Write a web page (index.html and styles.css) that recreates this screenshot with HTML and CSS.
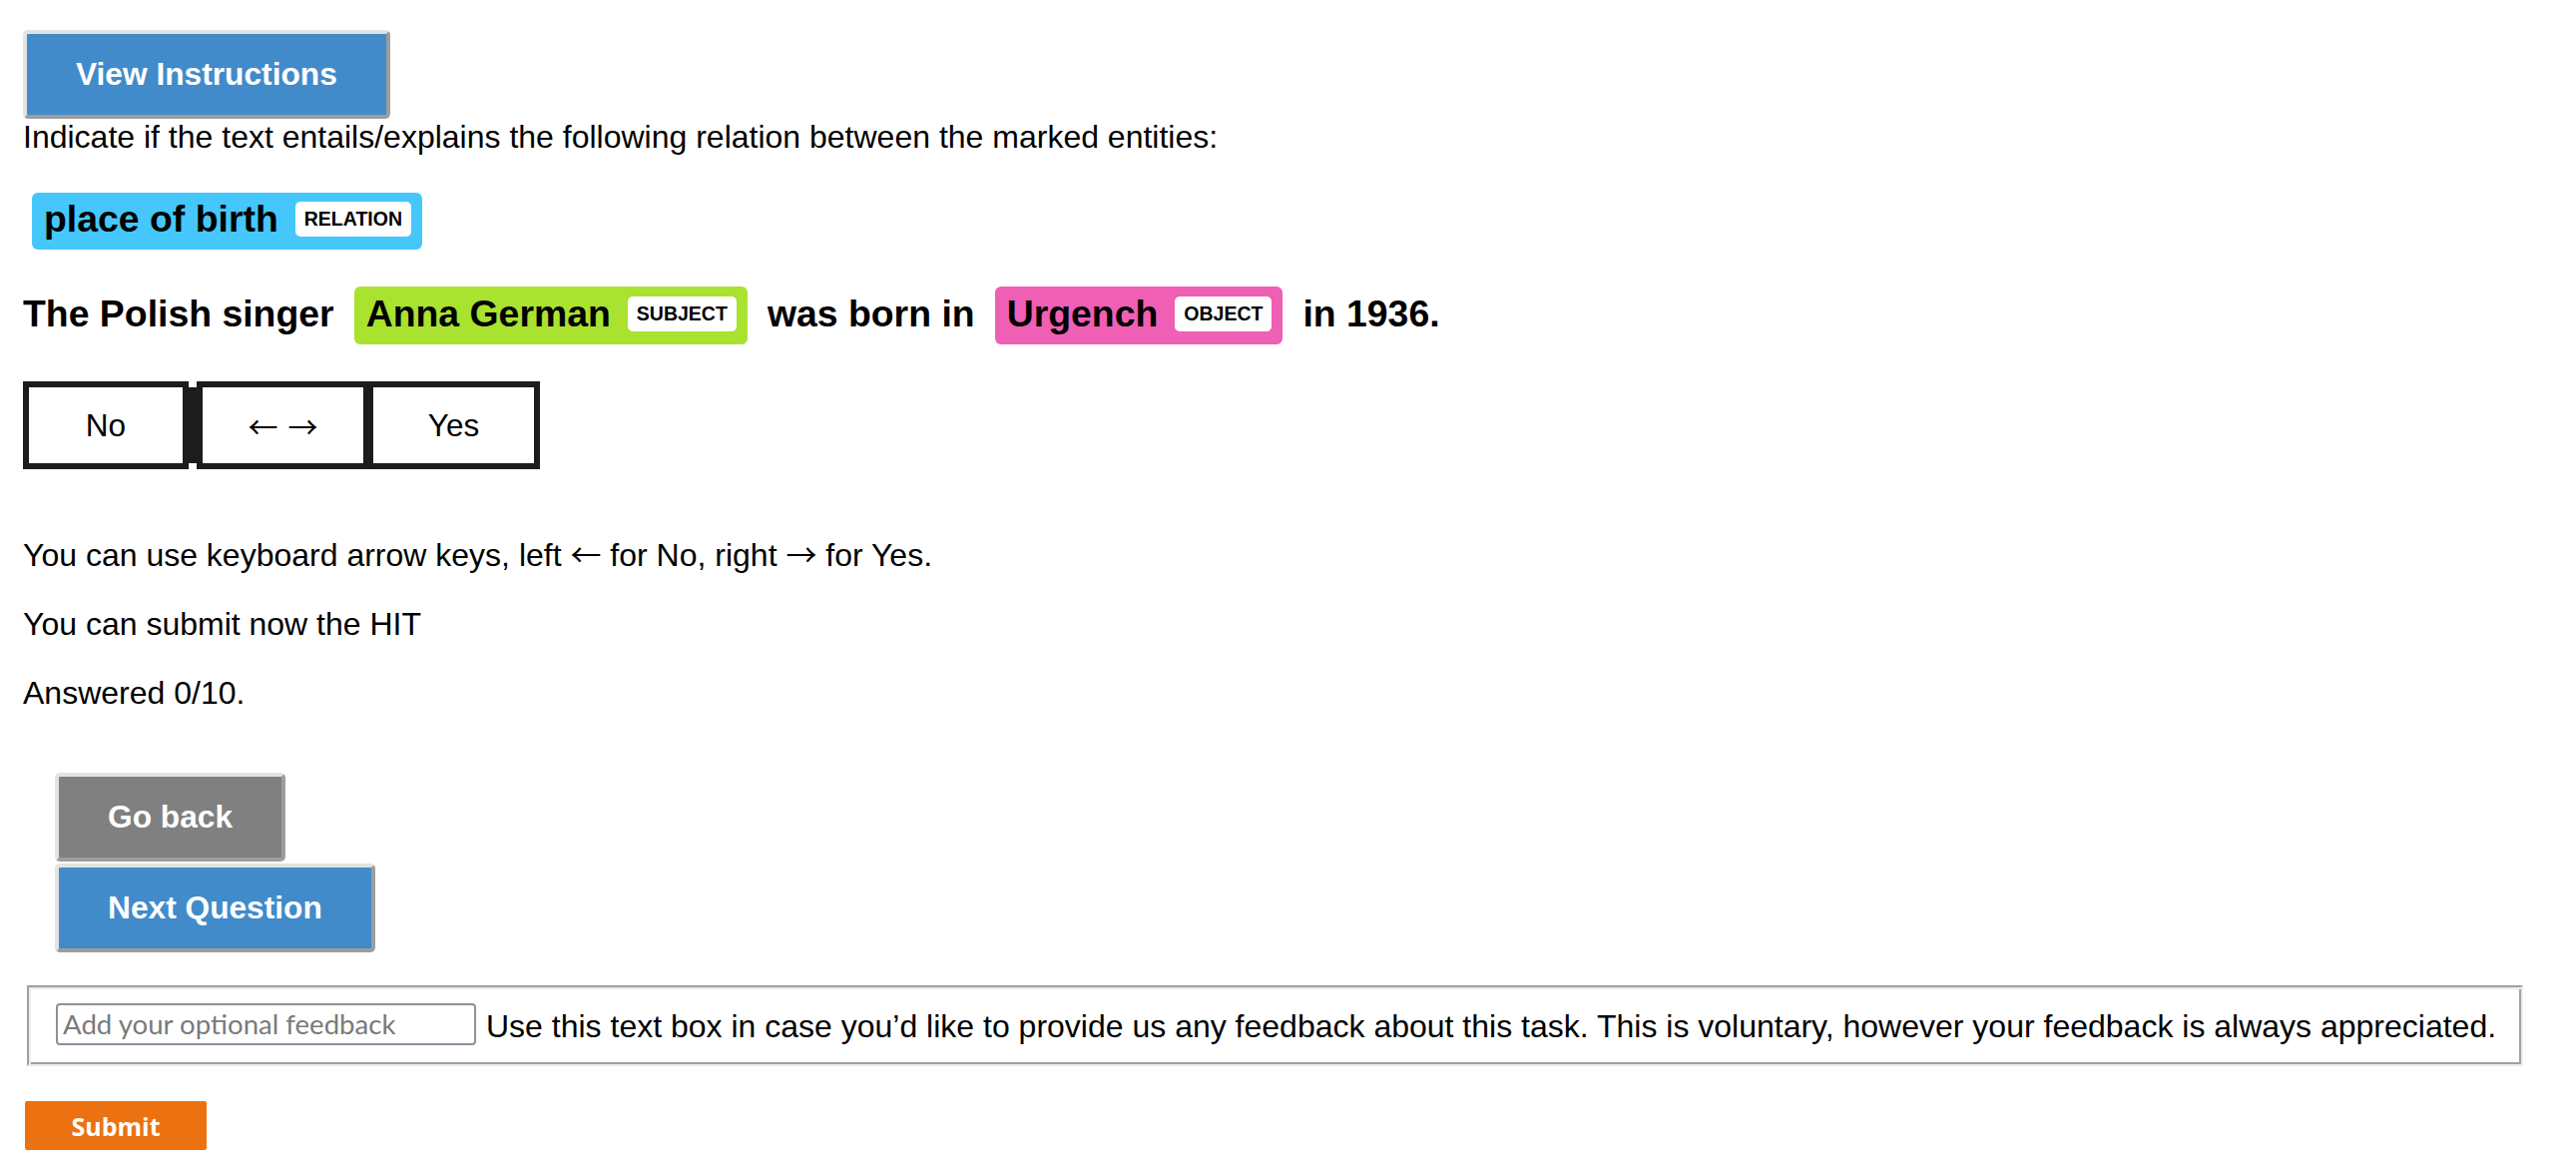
FILE: index.html
```html
<!DOCTYPE html>
<html lang="en">
<head>
<meta charset="utf-8">
<title>Relation task</title>
<link rel="stylesheet" href="styles.css">
</head>
<body>
<div class="page">
  <button class="btn btn-blue">View Instructions</button>
  <div class="prompt">Indicate if the text entails/explains the following relation between the marked entities:</div>

  <div class="relation">
    <span class="ent ent-rel"><span class="ent-text">place of birth</span><span class="tag">RELATION</span></span>
  </div>

  <div class="sentence">
    <span class="plain">The Polish singer</span>
    <span class="ent ent-subj"><span class="ent-text">Anna German</span><span class="tag">SUBJECT</span></span>
    <span class="plain">was born in</span>
    <span class="ent ent-obj"><span class="ent-text">Urgench</span><span class="tag">OBJECT</span></span>
    <span class="plain">in 1936.</span>
  </div>

  <div class="choices">
    <div class="choice choice-no">No</div>
    <div class="choice-bar"></div>
    <div class="choice choice-mid"><span class="arrow">←</span><span class="arrow">→</span></div>
    <div class="choice choice-yes">Yes</div>
  </div>

  <p class="info info-first">You can use keyboard arrow keys, left <span class="arrow">←</span> for No, right <span class="arrow">→</span> for Yes.</p>
  <p class="info">You can submit now the HIT</p>
  <p class="info">Answered 0/10.</p>

  <div class="nav">
    <button class="btn btn-gray">Go back</button>
    <button class="btn btn-blue">Next Question</button>
  </div>

  <div class="feedback">
    <input class="feedback-input" type="text" placeholder="Add your optional feedback">
    <span class="feedback-text">Use this text box in case you’d like to provide us any feedback about this task. This is voluntary, however your feedback is always appreciated.</span>
  </div>

  <button class="submit">Submit</button>
</div>
</body>
</html>
```

FILE: styles.css
```css
html, body {
  margin: 0;
  padding: 0;
  background: #ffffff;
}

body {
  font-family: "Liberation Sans", Arial, sans-serif;
  font-size: 32px;
  color: #000000;
}

.page {
  display: flex;
  flex-direction: column;
  align-items: flex-start;
  padding: 30px 0 0 23px;
}

.btn {
  font-family: "Liberation Sans", Arial, sans-serif;
  font-weight: 700;
  font-size: 31.7px;
  line-height: 35px;
  color: #ffffff;
  padding: 23px 49px;
  margin: 0;
  border: 4px solid;
  border-color: #e3e3e3 #9d9d9d #9d9d9d #e3e3e3;
  border-radius: 5px;
  cursor: pointer;
}

.btn-blue {
  background: #428bca;
}

.btn-gray {
  background: #808080;
}

.prompt {
  line-height: 37px;
}

.relation {
  margin: 37px 0 0 9px;
}

.ent {
  display: inline-flex;
  align-items: center;
  box-sizing: border-box;
  height: 57px;
  padding: 3px 11px 7px 12px;
  border-radius: 6px;
  font-weight: 700;
  font-size: 37.4px;
  line-height: normal;
  color: #000000;
}

.ent-rel {
  background: #45c7fc;
}

.ent-subj {
  background: #a9e22f;
  height: 58px;
}

.ent-obj {
  background: #ef5fb4;
  height: 58px;
}

.tag {
  font-size: 19.5px;
  line-height: 23px;
  font-weight: 700;
  padding: 6px 9px;
  margin-left: 17px;
  background: #ffffff;
  border-radius: 5px;
}

.sentence {
  display: flex;
  align-items: baseline;
  gap: 20px;
  margin-top: 37px;
  font-weight: 700;
  font-size: 37.4px;
}

.choices {
  display: flex;
  margin-top: 37px;
  height: 88px;
}

.choice {
  box-sizing: border-box;
  height: 88px;
  border: 6px solid #1c1c1c;
  display: flex;
  align-items: center;
  justify-content: center;
  font-size: 31.5px;
  background: #ffffff;
}

.choice-no {
  width: 166px;
}

.choice-bar {
  width: 8px;
  margin: 6px 0;
  background: #1c1c1c;
}

.choice-mid {
  width: 172px;
  border-right-width: 5px;
  gap: 10px;
}

.choice-yes {
  width: 172px;
  border-left-width: 5px;
}

.arrow {
  font-family: "Noto Sans CJK JP", "Liberation Sans", sans-serif;
  font-weight: 400;
  font-size: 30px;
  line-height: 1;
}

.info .arrow {
  font-size: 31px;
}

.info {
  margin: 32.4px 0 0 0;
  line-height: 36.5px;
}

.info-first {
  margin-top: 68px;
}

.nav {
  display: flex;
  flex-direction: column;
  align-items: flex-start;
  gap: 2px;
  margin: 62px 0 0 32px;
}

.feedback {
  box-sizing: border-box;
  display: flex;
  align-items: center;
  gap: 10px;
  width: 2501px;
  height: 81px;
  margin: 33px 0 0 4px;
  padding: 0 24px 4px 27px;
  border: 2px solid;
  border-color: #a0a0a0 #ececec #ececec #a0a0a0;
  box-shadow: inset 2px 2px 0 #ececec, inset -2px -2px 0 #a0a0a0;
  white-space: nowrap;
}

.feedback-input {
  box-sizing: border-box;
  flex: none;
  width: 421px;
  height: 42px;
  margin: 0;
  padding: 0 5px;
  border: 2px solid #8f8f9d;
  border-radius: 4px;
  font-family: Lato, "Open Sans", sans-serif;
  font-size: 27.6px;
  color: #000000;
}

.feedback-input::placeholder {
  color: #7a7a7a;
}

.feedback-text {
  line-height: 36px;
  padding-top: 4px;
}

.submit {
  margin: 35px 0 0 2px;
  width: 182px;
  height: 49px;
  padding: 0;
  border: none;
  border-radius: 2px;
  background: #ec7211;
  color: #ffffff;
  font-family: "Open Sans", sans-serif;
  font-weight: 700;
  font-size: 25px;
  cursor: pointer;
}
```
